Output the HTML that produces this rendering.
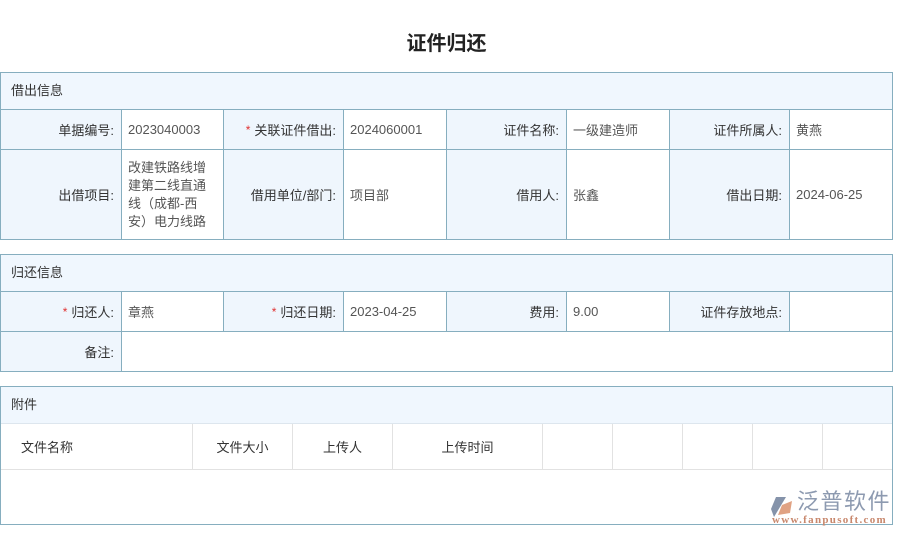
<!DOCTYPE html>
<html><head><meta charset="utf-8"><style>
*{margin:0;padding:0;box-sizing:border-box}
body{width:900px;height:539px;background:#fff;position:relative;overflow:hidden;font-family:"Liberation Sans","Noto Sans CJK SC",sans-serif;font-size:13px;color:#333}
.a{position:absolute}
.box{position:absolute;left:0;width:893px;border:1px solid #86aebf}
.hd{position:absolute;left:0;right:0;top:0;height:37px;background:#f0f7fe;border-bottom:1px solid #86aebf;line-height:36px;padding-left:10px;color:#333}
.c{position:absolute;border-right:1px solid #86aebf;border-bottom:1px solid #86aebf;display:flex;align-items:center;padding:0 6px}
.l{background:#eff6fd;justify-content:flex-end;padding-right:7px;color:#333}
.v{background:#fff;color:#555}
.s{color:#e03030;margin-right:4px;font-size:12px}
.g{position:absolute;border-right:1px solid #e2e2e2;height:45px;top:37px;display:flex;align-items:center;color:#333}
</style></head><body>
<div class="a" style="left:0;width:893px;top:27px;text-align:center;font-size:20px;font-weight:bold;color:#222">证件归还</div>

<div class="box" style="top:72px;height:168px">
<div class="hd">借出信息</div>
<div class="c l" style="left:0;top:37px;width:121px;height:40px">单据编号:</div>
<div class="c v" style="left:121px;top:37px;width:102px;height:40px">2023040003</div>
<div class="c l" style="left:223px;top:37px;width:120px;height:40px"><span class="s">*</span>关联证件借出:</div>
<div class="c v" style="left:343px;top:37px;width:103px;height:40px">2024060001</div>
<div class="c l" style="left:446px;top:37px;width:120px;height:40px">证件名称:</div>
<div class="c v" style="left:566px;top:37px;width:103px;height:40px">一级建造师</div>
<div class="c l" style="left:669px;top:37px;width:120px;height:40px">证件所属人:</div>
<div class="c v" style="left:789px;top:37px;width:102px;height:40px;border-right:none">黄燕</div>
<div class="c l" style="left:0;top:77px;width:121px;height:89px;border-bottom:none">出借项目:</div>
<div class="c v" style="left:121px;top:77px;width:102px;height:89px;border-bottom:none;line-height:18px">改建铁路线增<br>建第二线直通<br>线（成都-西<br>安）电力线路</div>
<div class="c l" style="left:223px;top:77px;width:120px;height:89px;border-bottom:none">借用单位/部门:</div>
<div class="c v" style="left:343px;top:77px;width:103px;height:89px;border-bottom:none">项目部</div>
<div class="c l" style="left:446px;top:77px;width:120px;height:89px;border-bottom:none">借用人:</div>
<div class="c v" style="left:566px;top:77px;width:103px;height:89px;border-bottom:none">张鑫</div>
<div class="c l" style="left:669px;top:77px;width:120px;height:89px;border-bottom:none">借出日期:</div>
<div class="c v" style="left:789px;top:77px;width:102px;height:89px;border-bottom:none;border-right:none">2024-06-25</div>
</div>

<div class="box" style="top:254px;height:118px">
<div class="hd">归还信息</div>
<div class="c l" style="left:0;top:37px;width:121px;height:40px"><span class="s">*</span>归还人:</div>
<div class="c v" style="left:121px;top:37px;width:102px;height:40px">章燕</div>
<div class="c l" style="left:223px;top:37px;width:120px;height:40px"><span class="s">*</span>归还日期:</div>
<div class="c v" style="left:343px;top:37px;width:103px;height:40px">2023-04-25</div>
<div class="c l" style="left:446px;top:37px;width:120px;height:40px">费用:</div>
<div class="c v" style="left:566px;top:37px;width:103px;height:40px">9.00</div>
<div class="c l" style="left:669px;top:37px;width:120px;height:40px">证件存放地点:</div>
<div class="c v" style="left:789px;top:37px;width:102px;height:40px;border-right:none"></div>
<div class="c l" style="left:0;top:77px;width:121px;height:39px;border-bottom:none">备注:</div>
</div>

<div class="box" style="top:386px;height:139px">
<div class="hd" style="border-bottom-color:#dde6ee">附件</div>
<div class="a" style="left:0;right:0;top:82px;border-top:1px solid #e2e2e2"></div>
<div class="g" style="left:0;width:192px;padding-left:20px">文件名称</div>
<div class="g" style="left:192px;width:100px;justify-content:center">文件大小</div>
<div class="g" style="left:292px;width:100px;justify-content:center">上传人</div>
<div class="g" style="left:392px;width:150px;justify-content:center">上传时间</div>
<div class="g" style="left:542px;width:70px"></div>
<div class="g" style="left:612px;width:70px"></div>
<div class="g" style="left:682px;width:70px"></div>
<div class="g" style="left:752px;width:70px"></div>
</div>

<svg class="a" style="left:770px;top:495px" width="26" height="24" viewBox="0 0 26 24">
<path d="M6 2 L16 2 L10 12 L4 22 L1 14 Z" fill="#8593aa"/>
<path d="M12 10 L22 6 L20 18 L8 20 Z" fill="#e0a283"/>
</svg>
<div class="a" style="left:797px;top:490px;font-size:22px;line-height:24px;color:#8d9ab0;letter-spacing:1.5px">泛普软件</div>
<div class="a" style="left:772px;top:514px;font-family:'Liberation Serif',serif;font-weight:bold;font-size:11px;line-height:12px;color:#c8876c;letter-spacing:1.3px">www.fanpusoft.com</div>
</body></html>
